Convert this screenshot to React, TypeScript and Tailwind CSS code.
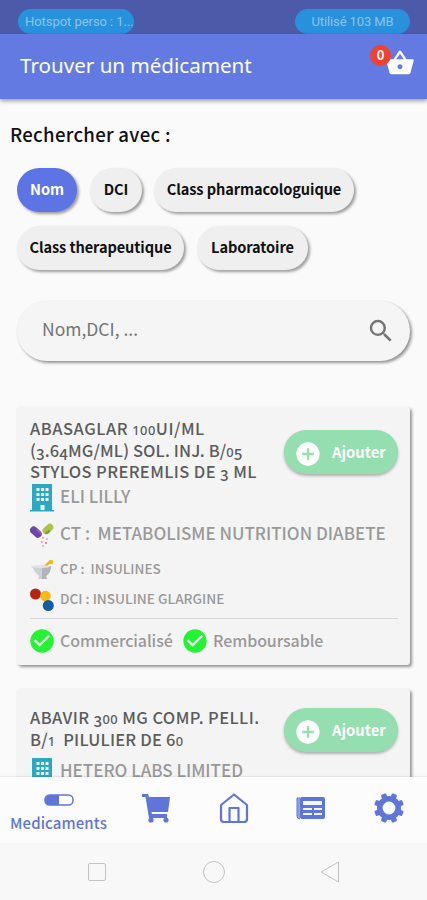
import React from "react";
import { MdShoppingBasket, MdSearch, MdAddCircle, MdCheckCircle } from "react-icons/md";

function Chip({ label, className }: { label: string; className: string }) {
  return (
    <button
      className={`flex h-11 shrink-0 items-center justify-center whitespace-nowrap rounded-full pb-0.5 text-[14.600px] font-semibold tracking-[-0.1px] shadow-[2px_2px_3px_rgba(0,0,0,0.38)] ${className}`}
    >
      {label}
    </button>
  );
}

// Text figures: 0, 1 and 2 sit at x-height, 3, 4, 5, 7 and 9 hang below the baseline.
function Figures({ text }: { text: string }) {
  return (
    <>
      {text.split(/([0-9])/).map((part, i) =>
        /^[012]$/.test(part) ? (
          <span key={i} className="font-['Noto_Sans',sans-serif] text-[0.78em] leading-none">{part}</span>
        ) : /^[34579]$/.test(part) ? (
          <span key={i} className="align-[-0.18em] text-[0.92em] leading-none">{part}</span>
        ) : (
          part
        ),
      )}
    </>
  );
}

function Title({ lines }: { lines: [string, string][] }) {
  return (
    <h3 className="whitespace-pre text-[16.500px] font-medium text-[#5c5c5c]">
      {lines.map(([line, tracking]) => (
        <span key={line} className={`block h-[21.500px] leading-[21.500px] ${tracking}`}><Figures text={line} /></span>
      ))}
    </h3>
  );
}

function Building() {
  return (
    <svg viewBox="0 0 24 28" className="h-7 w-6 shrink-0">
      <path fill="#2ba9c3" d="M2 0h20v26h2v1.500H0V26h2z" />
      <path fill="#eefafc" d="M6.500 4h3v3h-3zm4.500 0h3v3h-3zm4.500 0h3v3h-3zM6.500 9h3v3h-3zm4.500 0h3v3h-3zm4.500 0h3v3h-3zM6.500 14h3v3h-3zm4.500 0h3v3h-3zm4.500 0h3v3h-3zM10.500 21h4v5h-4z" />
    </svg>
  );
}

function Capsules() {
  return (
    <svg viewBox="0 0 24 24" className="size-6 shrink-0">
      <g transform="rotate(42 6 9)">
        <rect x="-0.500" y="5.500" width="13" height="7.500" rx="3.700" fill="#6d45a5" />
        <path d="M5 5.500h4a3.500 3.500 0 0 1 2.700 2H5z" fill="#8960b8" />
      </g>
      <g transform="rotate(-42 18 6)">
        <rect x="12" y="2.500" width="12" height="7" rx="3.500" fill="#a9c34c" />
        <path d="M12.500 7a3.500 3.500 0 0 0 3 2.500H18V7z" fill="#7c9c33" />
      </g>
      <g fill="#d55b83">
        <circle cx="13" cy="15" r=".8" /><circle cx="17" cy="16" r=".7" />
        <circle cx="12" cy="19" r=".8" /><circle cx="16" cy="20" r=".9" />
        <circle cx="13" cy="23" r=".8" />
      </g>
    </svg>
  );
}

function Mortar() {
  return (
    <svg viewBox="0 0 24 22" className="h-[22px] w-6 shrink-0">
      <path d="M14 8l6-5" stroke="#dfb62c" strokeWidth="2.500" />
      <circle cx="21" cy="3" r="2.300" fill="#f0bd18" />
      <path d="M1 7h20q0 7-5 10l1 3H8l1-3Q4 13 3 9z" fill="#ced1d6" />
      <path d="M12 7h9q0 7-5 10l1 3h-5z" fill="#b1b4bb" />
      <ellipse cx="11" cy="7.500" rx="9" ry="1.500" fill="#e2e4e7" />
    </svg>
  );
}

function Molecule() {
  return (
    <svg viewBox="0 0 24 24" className="size-6 shrink-0">
      <path d="M6 6l9 3 3 8" stroke="#c8b58b" strokeWidth="2" fill="none" />
      <circle cx="5.500" cy="6" r="5.500" fill="#b62410" />
      <circle cx="15.500" cy="8" r="5.300" fill="#f4ba16" />
      <circle cx="18.300" cy="17.500" r="5.500" fill="#155aa5" />
    </svg>
  );
}

function Gear() {
  return (
    <svg viewBox="0 0 30 30" className="size-[30px]" fill="currentColor">
      <circle cx="15" cy="15" r="9.200" fill="none" stroke="currentColor" strokeWidth="5.600" />
      {[22.5, 67.5, 112.5, 157.5, 202.5, 247.5, 292.5, 337.5].map((angle) => (
        <rect key={angle} x="12.200" y="0" width="5.600" height="6" rx="1.300" transform={`rotate(${angle} 15 15)`} />
      ))}
    </svg>
  );
}

function AddButton() {
  return (
    <button className="mr-3 flex h-11 w-[114px] shrink-0 items-center rounded-full bg-[#95deaf] pl-2.5 text-white shadow-[0_2px_3px_rgba(0,0,0,0.28)]">
      <MdAddCircle className="mt-[3px] size-7 shrink-0" />
      <span className="ml-[10px] text-[14.800px] font-bold">Ajouter</span>
    </button>
  );
}

const cardClass =
  "mx-[17px] rounded-[3px] bg-[#f4f4f4] pl-[13px] shadow-[2px_2px_3px_rgba(0,0,0,0.4),0_0_2px_rgba(0,0,0,0.06)]";

export default function App() {
  return (
    <div className="flex h-[900px] w-[427px] flex-col overflow-hidden bg-[#fafafa] font-['Noto_Sans_CJK_SC','Noto_Sans',sans-serif]">
      <div className="flex h-[34px] shrink-0 items-end justify-between bg-[#4b5ba9] pl-[18px] pr-[17px] font-['Roboto',sans-serif] text-[13px] text-[#8bc4ed]">
        <div className="flex h-[25px] w-[116px] items-center whitespace-nowrap rounded-full bg-[#2791dc] pl-[7px] tracking-[-0.05px]">Hotspot perso : 1...</div>
        <div className="flex h-[25px] w-[115px] items-center justify-center rounded-full bg-[#2791dc] tracking-[-0.1px]">Utilisé 103 MB</div>
      </div>

      <header className="z-10 flex h-[65px] shrink-0 items-center justify-between bg-[#637ae2] pl-5 pr-[12px] text-white shadow-[0_2px_4px_rgba(0,0,0,0.38)]">
        <h1 className="pb-0.5 font-['Noto_Sans',sans-serif] text-[20.600px]">Trouver un médicament</h1>
        <div className="relative mt-[-7px]">
          <MdShoppingBasket className="size-[30px]" />
          <span className="absolute -left-[15px] -top-[3px] flex size-[21px] items-center justify-center rounded-full bg-[#f4402f] pb-px text-[13px] font-bold">0</span>
        </div>
      </header>

      <main className="flex min-h-0 flex-1 flex-col overflow-hidden">
        <h2 className="ml-[10px] mt-[21px] h-7 shrink-0 text-[18.600px] font-medium leading-7 tracking-[0.3px] text-[#111]">Rechercher avec :</h2>
        <div className="ml-[17px] mt-5 flex shrink-0">
          <Chip label="Nom" className="w-[60px] bg-[#5d74e4] text-white" />
          <Chip label="DCI" className="ml-[13px] w-[52px] bg-[#efefef] text-[#111]" />
          <Chip label="Class pharmacologuique" className="ml-3 w-[200px] bg-[#efefef] text-[#111]" />
        </div>
        <div className="ml-[17px] mt-[14px] flex shrink-0">
          <Chip label="Class therapeutique" className="w-[167px] bg-[#efefef] text-[#111]" />
          <Chip label="Laboratoire" className="ml-[13px] w-[111px] bg-[#efefef] text-[#111]" />
        </div>
        <div className="mx-[17px] mt-[31px] flex h-[60px] shrink-0 items-center justify-between rounded-full bg-[#f5f5f5] pl-[25px] pr-[14px] shadow-[2px_2px_3px_rgba(0,0,0,0.4),0_0_2px_rgba(0,0,0,0.06)]">
          <span className="pb-[3px] text-[17.500px] text-[#747474]">Nom,DCI, ...</span>
          <MdSearch className="size-[30px] text-[#757575]" />
        </div>

        <section className={`${cardClass} mt-[46px] h-[258px] shrink-0`}>
          <div className="flex h-[75px] justify-between pt-[11px]">
            <Title
              lines={[
                ["ABASAGLAR 100UI/ML", "tracking-[0.5px]"],
                ["(3.64MG/ML) SOL. INJ. B/05", "tracking-[0.1px]"],
                ["STYLOS PREREMLIS DE 3 ML", "tracking-[0.38px]"],
              ]}
            />
            <div className="pt-3"><AddButton /></div>
          </div>
          <div className="flex h-[31px] items-center gap-1.5 text-[17px] font-medium text-[#999]"><Building /><span className="pb-1">ELI LILLY</span></div>
          <div className="flex h-[43px] items-center gap-1.5 whitespace-pre text-[17px] font-medium text-[#999]"><Capsules /><span className="pb-[3px]">CT :  METABOLISME NUTRITION DIABETE</span></div>
          <div className="flex h-[28px] items-center gap-1.5 whitespace-pre text-[13.500px] font-medium text-[#999]"><Mortar /><span className="pb-[3px]">CP :  INSULINES</span></div>
          <div className="flex h-[32px] items-center gap-1.5 text-[13.600px] font-medium text-[#999]"><Molecule /><span className="pb-[3px]">DCI : INSULINE GLARGINE</span></div>
          <div className="mr-3 mt-[2px] h-px bg-[#d8d8d8]" />
          <div className="flex h-[44px] items-center text-[16px] font-medium text-[#999]">
            <MdCheckCircle className="-ml-[2px] size-7 text-[#22f333]" />
            <span className="ml-1 w-[121px] pb-[3px] tracking-[-0.1px]">Commercialisé</span>
            <MdCheckCircle className="size-7 text-[#22f333]" />
            <span className="ml-1 pb-[3px] tracking-[-0.1px]">Remboursable</span>
          </div>
        </section>

        <section className={`${cardClass} mt-[24px] h-[180px] shrink-0`}>
          <div className="flex h-[67px] justify-between pt-[18px]">
            <Title lines={[["ABAVIR 300 MG COMP. PELLI.", "tracking-[0.4px]"], ["B/1  PILULIER DE 60", "tracking-[0.2px]"]]} />
            <div className="pt-px"><AddButton /></div>
          </div>
          <div className="flex h-[31px] items-center gap-1.5 text-[17px] font-medium text-[#999]"><Building /><span className="pb-1">HETERO LABS LIMITED</span></div>
        </section>
      </main>

      <nav className="z-10 grid h-[66px] shrink-0 grid-cols-[117px_78px_77px_78px_77px] bg-[#fcfcfc] text-[#5f76d9] shadow-[0_-1px_1px_rgba(0,0,0,0.06)]">
        <div className="flex flex-col items-center pt-[17px]">
          <svg viewBox="0 0 30 12" className="h-3 w-[30px]">
            <rect x="1" y="1" width="28" height="10" rx="4.500" fill="white" stroke="currentColor" strokeWidth="1.500" />
            <path d="M15 1H6a5 5 0 0 0 0 10h9z" fill="currentColor" />
          </svg>
          <span className="mt-[5px] text-[15px] font-medium leading-6 tracking-[0.1px]">Medicaments</span>
        </div>
        <div className="flex justify-center pt-4">
          <svg viewBox="0 0 30 30" className="size-[30px]">
            <path d="M1 1h6l1 3h21l-2 15H10.500l.5 2H26v4H8L4.500 4H1z" fill="currentColor" />
            <circle cx="10" cy="27" r="2.600" fill="currentColor" /><circle cx="25" cy="27" r="2.600" fill="currentColor" />
          </svg>
        </div>
        <div className="flex justify-center pt-4">
          <svg viewBox="0 0 30 30" className="size-[30px]" fill="none" stroke="currentColor" strokeWidth="2.200" strokeLinejoin="round">
            <path d="M2 12L15 1.500 28 12v14q0 3-3 3H5q-3 0-3-3zM10.500 29V15h9v14" />
          </svg>
        </div>
        <div className="flex justify-center pt-[19px]">
          <svg viewBox="0 0 30 24" className="h-6 w-[30px]">
            <path d="M4 2H1v18q0 3 3 3" fill="#91a0e5" stroke="currentColor" />
            <rect x="4" y="1" width="25" height="22" rx="2" fill="currentColor" />
            <path d="M7 5h19v4H7zM7 12h9v2H7zm11 0h8v2h-8zM7 17h9v2H7zm11 0h8v2h-8z" fill="#f4f6ff" />
          </svg>
        </div>
        <div className="flex justify-center pt-4"><Gear /></div>
      </nav>

      <footer className="z-10 flex h-[57px] shrink-0 items-center bg-[#f8f8f8] pl-[88px] text-[#c3c3c3]">
        <div className="size-[18px] rounded-[2px] border border-current" />
        <div className="ml-[97px] size-[22px] rounded-full border border-current" />
        <svg viewBox="0 0 20 22" className="ml-[95px] h-[22px] w-5" fill="none" stroke="currentColor" strokeLinejoin="round">
          <path d="M18.500 1v20L1 11z" />
        </svg>
      </footer>
    </div>
  );
}
